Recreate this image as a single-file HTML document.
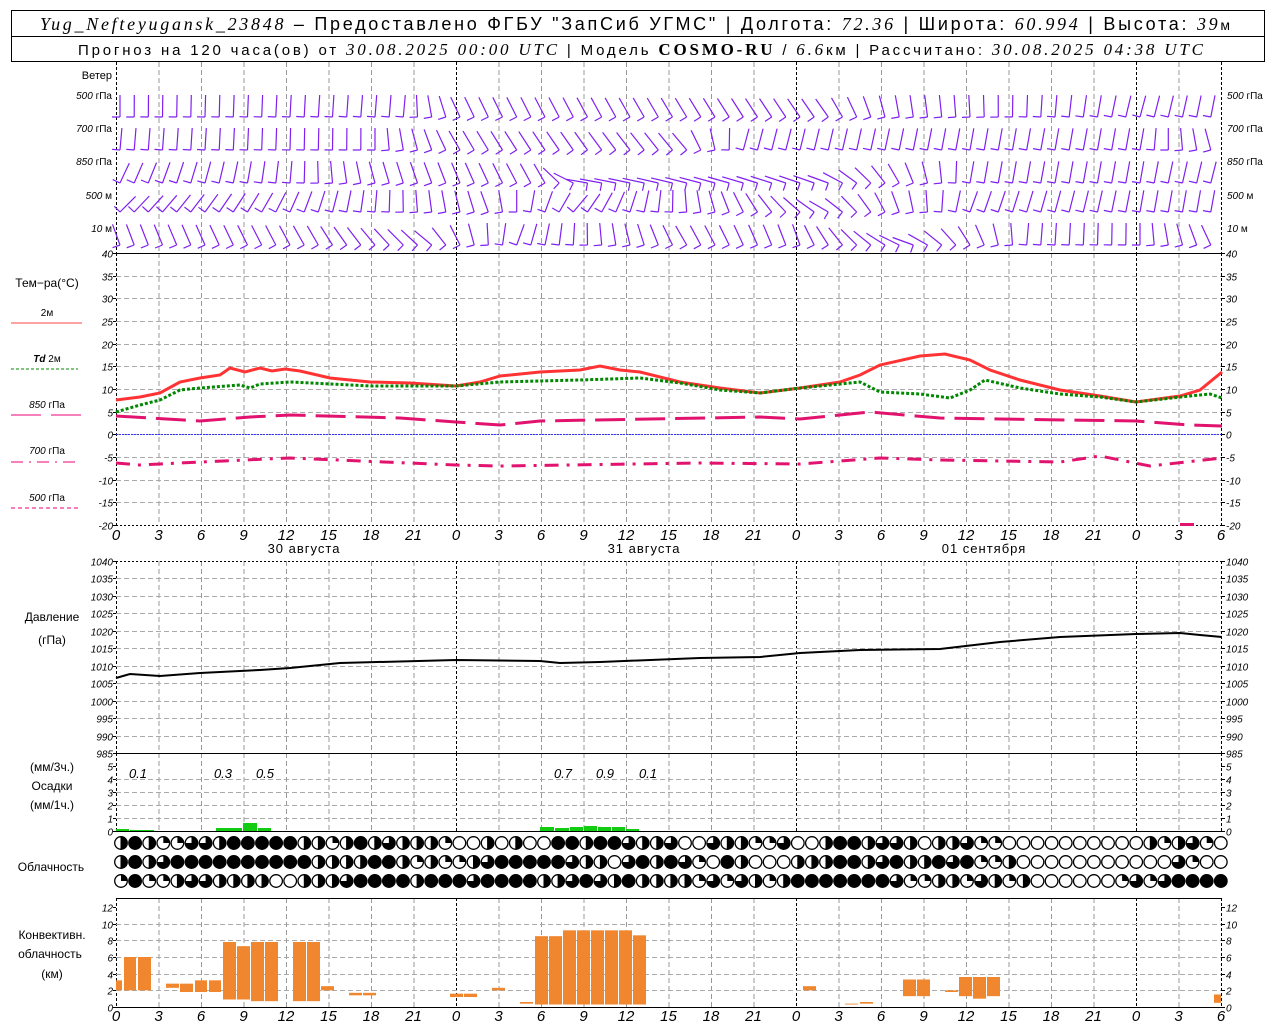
<!DOCTYPE html>
<html><head><meta charset="utf-8">
<style>
body{margin:0;background:#fff;width:1280px;height:1024px;overflow:hidden;font-family:"Liberation Sans",sans-serif;}
svg{position:absolute;left:0;top:0}
</style></head>
<body>
<svg id="s" width="1280" height="1024" xmlns="http://www.w3.org/2000/svg" font-family="Liberation Sans, sans-serif">
<rect x="11.5" y="10.5" width="1253" height="51" fill="none" stroke="#000"/>
<line x1="11" y1="36.5" x2="1265" y2="36.5" stroke="#000"/>
<text x="40" y="30" font-size="18" textLength="1190" lengthAdjust="spacing"><tspan font-family="Liberation Serif, serif" font-style="italic">Yug_Nefteyugansk_23848</tspan> – Предоставлено ФГБУ "ЗапСиб УГМС" | Долгота: <tspan font-family="Liberation Serif, serif" font-style="italic">72.36</tspan> | Широта: <tspan font-family="Liberation Serif, serif" font-style="italic">60.994</tspan> | Высота: <tspan font-family="Liberation Serif, serif" font-style="italic">39</tspan><tspan font-size="14">м</tspan></text>
<text x="78" y="55" font-size="15" textLength="1125" lengthAdjust="spacing">Прогноз на 120 часа(ов) от <tspan font-family="Liberation Serif, serif" font-style="italic" font-size="17">30.08.2025 00:00 UTC</tspan>  | Модель <tspan font-family="Liberation Serif, serif" font-weight="bold" font-size="17">COSMO-RU</tspan> / <tspan font-family="Liberation Serif, serif" font-style="italic" font-size="17">6.6</tspan>км | Рассчитано: <tspan font-family="Liberation Serif, serif" font-style="italic" font-size="17">30.08.2025 04:38 UTC</tspan></text>
<g font-size="11">
<text x="112" y="79" text-anchor="end">Ветер</text>
<text x="112" y="99" text-anchor="end" font-size="10"><tspan font-style="italic">500</tspan> гПа</text>
<text x="112" y="132" text-anchor="end" font-size="10"><tspan font-style="italic">700</tspan> гПа</text>
<text x="112" y="165" text-anchor="end" font-size="10"><tspan font-style="italic">850</tspan> гПа</text>
<text x="112" y="199" text-anchor="end" font-size="10"><tspan font-style="italic">500</tspan>  м</text>
<text x="112" y="232" text-anchor="end" font-size="10"><tspan font-style="italic">10</tspan>   м</text>
<text x="1227" y="99" font-size="10"><tspan font-style="italic">500</tspan> гПа</text>
<text x="1227" y="132" font-size="10"><tspan font-style="italic">700</tspan> гПа</text>
<text x="1227" y="165" font-size="10"><tspan font-style="italic">850</tspan> гПа</text>
<text x="1227" y="199" font-size="10"><tspan font-style="italic">500</tspan>  м</text>
<text x="1227" y="232" font-size="10"><tspan font-style="italic">10</tspan>   м</text>
<text x="47" y="287" text-anchor="middle" font-size="12">Тем−ра(°C)</text>
<text x="47" y="316" text-anchor="middle" font-size="10">2м</text>
<line x1="11" y1="323" x2="82" y2="323" stroke="#f44"/>
<text x="47" y="362" text-anchor="middle" font-size="10"><tspan font-style="italic" font-weight="bold">Td</tspan>  2м</text>
<line x1="11" y1="369" x2="78" y2="369" stroke="#080" stroke-dasharray="3,2"/>
<text x="47" y="408" text-anchor="middle" font-size="10"><tspan font-style="italic">850</tspan> гПа</text>
<line x1="11" y1="415" x2="82" y2="415" stroke="#e07" stroke-dasharray="30,10"/>
<text x="47" y="454" text-anchor="middle" font-size="10"><tspan font-style="italic">700</tspan> гПа</text>
<line x1="11" y1="462" x2="78" y2="462" stroke="#e07" stroke-dasharray="12,6,2,6"/>
<text x="47" y="501" text-anchor="middle" font-size="10"><tspan font-style="italic">500</tspan> гПа</text>
<line x1="11" y1="508" x2="78" y2="508" stroke="#e07" stroke-dasharray="4,3"/>
<text x="52" y="621" text-anchor="middle" font-size="12">Давление</text>
<text x="52" y="644" text-anchor="middle" font-size="12">(гПа)</text>
<text x="52" y="771" text-anchor="middle" font-size="12">(мм/3ч.)</text>
<text x="52" y="790" text-anchor="middle" font-size="12">Осадки</text>
<text x="52" y="809" text-anchor="middle" font-size="12">(мм/1ч.)</text>
<text x="51" y="871" text-anchor="middle" font-size="12">Облачность</text>
<text x="52" y="939" text-anchor="middle" font-size="12">Конвективн.</text>
<text x="50" y="958" text-anchor="middle" font-size="12">облачность</text>
<text x="52" y="978" text-anchor="middle" font-size="12">(км)</text>
<text x="304" y="553" text-anchor="middle" font-size="13" letter-spacing="1">30 августа</text>
<text x="644" y="553" text-anchor="middle" font-size="13" letter-spacing="1">31 августа</text>
<text x="984" y="553" text-anchor="middle" font-size="13" letter-spacing="1">01 сентября</text>
<g font-style="italic" font-size="13">
<text x="138" y="778" text-anchor="middle">0.1</text>
<text x="223" y="778" text-anchor="middle">0.3</text>
<text x="265" y="778" text-anchor="middle">0.5</text>
<text x="563" y="778" text-anchor="middle">0.7</text>
<text x="605" y="778" text-anchor="middle">0.9</text>
<text x="648" y="778" text-anchor="middle">0.1</text>
</g>
</g>
<g id="g"></g>
</svg>
<script>
var NS="http://www.w3.org/2000/svg",G=document.getElementById("g");
function el(t,a,txt){var e=document.createElementNS(NS,t);for(var k in a)e.setAttribute(k,a[k]);if(txt!==undefined)e.textContent=txt;G.appendChild(e);return e;}
var X0=116,PH=340/24,XR=1221;
function X(h){return X0+h*PH;}
function vgrid(y1,y2){for(var h=3;h<78;h+=3){var day=h%24==0;el("line",{x1:X(h)+.5,y1:y1,x2:X(h)+.5,y2:y2,stroke:day?"#000":"#999","stroke-dasharray":day?"3,2":"5,3"});}
 el("line",{x1:X0+.5,y1:y1,x2:X0+.5,y2:y2,stroke:"#000","stroke-dasharray":"3,2"});
 el("line",{x1:XR+.5,y1:y1,x2:XR+.5,y2:y2,stroke:"#000","stroke-dasharray":"3,2"});}
function hgrid(y0,y1,vmin,vmax,step,ticks){for(var v=vmin;v<=vmax+1e-6;v+=step){var y=y1-(v-vmin)/(vmax-vmin)*(y1-y0);y=Math.round(y)+.5;
 if(v>vmin&&v<vmax)el("line",{x1:X0,y1:y,x2:XR,y2:y,stroke:"#aaa","stroke-dasharray":"5,3"});
 if(ticks){el("text",{x:X0-3,y:y+4,"text-anchor":"end","font-size":"10","font-style":"italic"},String(v));
 el("text",{x:XR+5,y:y+4,"font-size":"10","font-style":"italic"},String(v));
 el("line",{x1:X0-3,y1:y,x2:X0,y2:y,stroke:"#000"});el("line",{x1:XR,y1:y,x2:XR+4,y2:y,stroke:"#000"});}}}
vgrid(62,253);vgrid(253,525);vgrid(561,753);vgrid(753,831);vgrid(898,1007);
hgrid(253,525,-20,40,5,true);hgrid(561,753,985,1040,5,true);hgrid(766,831,0,5,1,true);hgrid(907,1007,0,12,2,true);
el("line",{x1:X0,y1:253.5,x2:XR,y2:253.5,stroke:"#000"});
el("line",{x1:X0,y1:525.5,x2:XR,y2:525.5,stroke:"#000","stroke-dasharray":"2,2"});
el("line",{x1:X0,y1:561.5,x2:XR,y2:561.5,stroke:"#000","stroke-dasharray":"2,2"});
el("line",{x1:X0,y1:753.5,x2:XR,y2:753.5,stroke:"#000"});
el("line",{x1:X0,y1:831.5,x2:XR,y2:831.5,stroke:"#000"});
el("line",{x1:X0,y1:898.5,x2:XR,y2:898.5,stroke:"#000"});
el("line",{x1:X0,y1:1007.5,x2:XR,y2:1007.5,stroke:"#000"});
el("line",{x1:X0,y1:434.5,x2:XR,y2:434.5,stroke:"#33f","stroke-dasharray":"2,1"});
for(var h=0;h<=78;h+=3){var l=String(h%24);el("text",{x:X(h),y:540,"text-anchor":"middle","font-size":"15","font-style":"italic"},l);el("text",{x:X(h),y:1021,"text-anchor":"middle","font-size":"15","font-style":"italic"},l);}
function poly(pts,attrs){var s=[];for(var i=0;i<pts.length;i+=2)s.push(pts[i]+","+pts[i+1]);attrs.points=s.join(" ");attrs.fill="none";el("polyline",attrs);}
poly([116,400,140,397,160,393,180,382,200,378,220,375,230,368,245,372,260,368,272,371,285,369,300,371,330,378,370,382,410,383,456,386,480,382,500,376,540,372,580,370,600,366,620,370,640,372,680,382,720,388,760,393,800,388,840,382,860,375,880,365,920,356,945,354,970,360,990,370,1020,380,1060,390,1100,396,1136,402,1180,396,1200,390,1222,372],{stroke:"#f33","stroke-width":3});
poly([116,412,140,405,160,400,180,390,200,388,240,385,250,388,260,384,290,382,330,384,370,386,456,386,500,382,580,380,640,378,680,383,720,390,760,393,800,388,860,382,880,392,920,394,950,398,970,390,985,380,1020,388,1060,394,1100,397,1136,402,1190,396,1210,394,1222,398],{stroke:"#080","stroke-width":3,"stroke-dasharray":"3,2"});
poly([116,416,200,421,250,417,290,415,400,418,456,422,500,425,540,421,760,417,800,419,870,412,940,418,1000,419,1136,421,1190,425,1222,426],{stroke:"#e2136e","stroke-width":3,"stroke-dasharray":"30,10"});
poly([116,463,140,465,200,462,290,458,456,465,500,466,700,463,800,464,880,458,940,460,1060,462,1100,456,1150,466,1222,458],{stroke:"#e2136e","stroke-width":3,"stroke-dasharray":"14,8,3,8"});
el("rect",{x:1180,y:523,width:14,height:3,fill:"#e2136e"});
poly([116,678,130,674,145,675,160,676,200,673,260,670,290,668,340,663,456,660,540,661,560,663,600,662,700,658,760,657,800,653,860,650,940,649,1000,642,1060,637,1136,634,1180,633,1200,635,1222,637],{stroke:"#000","stroke-width":2});
[[116,130,2],[130,155,1],[216,243,3],[243,258,8],[258,272,3],[540,555,4],[555,570,3],[570,584,4],[584,598,5],[598,612,4],[612,626,4],[626,640,2]].forEach(function(b){el("rect",{x:b[0],y:831-b[2],width:b[1]-b[0]-1,height:b[2],fill:"#1c1"});});
function cy(v){return 1007-v*8.333;}
[[116,123,2,3.2],[124,137,2,6],[138,152,2,6],[166,180,2.3,2.8],[180,194,1.8,2.8],[195,208,1.8,3.2],[209,222,1.8,3.2],[223,237,0.9,7.8],[237,251,0.9,7.3],[251,265,0.7,7.8],[265,279,0.7,7.8],[293,307,0.7,7.8],[307,321,0.7,7.8],[321,335,2,2.5],[349,363,1.4,1.7],[363,377,1.4,1.7],[450,464,1.2,1.6],[464,478,1.2,1.6],[492,506,2,2.3],[520,534,0.4,0.6],[535,549,0.3,8.5],[549,563,0.3,8.5],[563,577,0.3,9.2],[577,591,0.3,9.2],[591,605,0.3,9.2],[605,619,0.3,9.2],[619,633,0.3,9.2],[633,647,0.3,8.6],[803,817,2,2.5],[845,859,0.3,0.4],[860,874,0.4,0.6],[903,917,1.3,3.3],[917,931,1.3,3.3],[945,959,1.8,2],[959,973,1.3,3.6],[973,987,1,3.6],[987,1001,1.3,3.6],[1214,1222,0.5,1.5]].forEach(function(b){el("rect",{x:b[0],y:cy(b[3]),width:b[1]-b[0]-1,height:cy(b[2])-cy(b[3]),fill:"#f0862e"});});
var rows=["HBHQQTTHBBBBBHHQHBHT"+"HHHQWWHWHWWBBHBBTHHTWWTHHQQTWW"+"HBBHTTHWHHTQQWWWWWWWWWWHQHTQWW",
"HBHTBBBBBBBBBBHHHHBB"+"HQHQQHTBBBBBTHHWTBHBTQWBHWWWHH"+"HBBHTBHHBTBQQHWWWWWWWWWWWTQWW",
"QBQQHTTHHHHWWHHHTBBB"+"BHBBBTBBBBHHTBTHBHHHHQTQTHQHBB"+"BBBBBTQQHHQTHQHWWWWWWQTQTBBBBWW"];
var ys=[843,862,881];
rows.forEach(function(r,ri){for(var i=0;i<79;i++){var c=r[i]||"W",cx=121+i*14.1,y=ys[ri],R=6.3;
 el("circle",{cx:cx,cy:y,r:R,fill:c=="B"?"#000":"#fff",stroke:"#000","stroke-width":1.3});
 if(c=="H"){el("path",{d:"M"+cx+","+(y-R)+"A"+R+","+R+" 0 0 1 "+cx+","+(y+R)+"Z",fill:"#000"});el("line",{x1:cx,y1:y-R,x2:cx,y2:y+R,stroke:"#000"});}
 if(c=="Q"){el("path",{d:"M"+cx+","+y+"L"+cx+","+(y-R)+"A"+R+","+R+" 0 0 1 "+(cx+R)+","+y+"Z",fill:"#000"});}
 if(c=="T"){el("path",{d:"M"+cx+","+y+"L"+cx+","+(y-R)+"A"+R+","+R+" 0 1 1 "+(cx-R)+","+y+"Z",fill:"#000"});}
}});
var levels=[{y:117,a:[[0,0],[20,5],[24,-25],[50,-35],[55,-10],[66,5],[72,15],[78,10]]},
{y:150,a:[[0,5],[18,0],[24,-30],[40,-40],[44,15],[60,10],[72,10],[78,-20]]},
{y:183,a:[[0,25],[12,5],[18,-15],[30,-30],[33,-80],[50,-70],[60,10],[72,10],[78,15]]},
{y:212,a:[[0,45],[10,30],[18,5],[26,-20],[32,40],[50,-60],[60,20],[72,10],[78,10]]},
{y:245,a:[[0,-20],[14,-30],[22,-50],[28,20],[40,-30],[48,-20],[56,-70],[64,5],[72,0],[78,-30]]}];
function interp(a,h){for(var i=0;i<a.length-1;i++){if(h>=a[i][0]&&h<=a[i+1][0]){var t=(h-a[i][0])/(a[i+1][0]-a[i][0]);return a[i][1]+t*(a[i+1][1]-a[i][1]);}}return a[a.length-1][1];}
var d="";
levels.forEach(function(L){for(var h=0;h<=77;h++){var ang=interp(L.a,h)*Math.PI/180,x=X(h)+4,y=L.y,len=22;
 var tx=x+Math.sin(ang)*len,ty=y-Math.cos(ang)*len;
 d+="M"+x.toFixed(1)+","+y+"L"+tx.toFixed(1)+","+ty.toFixed(1);
 var px=-Math.cos(ang),py=-Math.sin(ang);
 d+="M"+x.toFixed(1)+","+y+"L"+(x+px*8).toFixed(1)+","+(y+py*8).toFixed(1);
 }});
el("path",{d:d,stroke:"#8020f0","stroke-width":1.2,fill:"none"});
</script>
</body></html>
